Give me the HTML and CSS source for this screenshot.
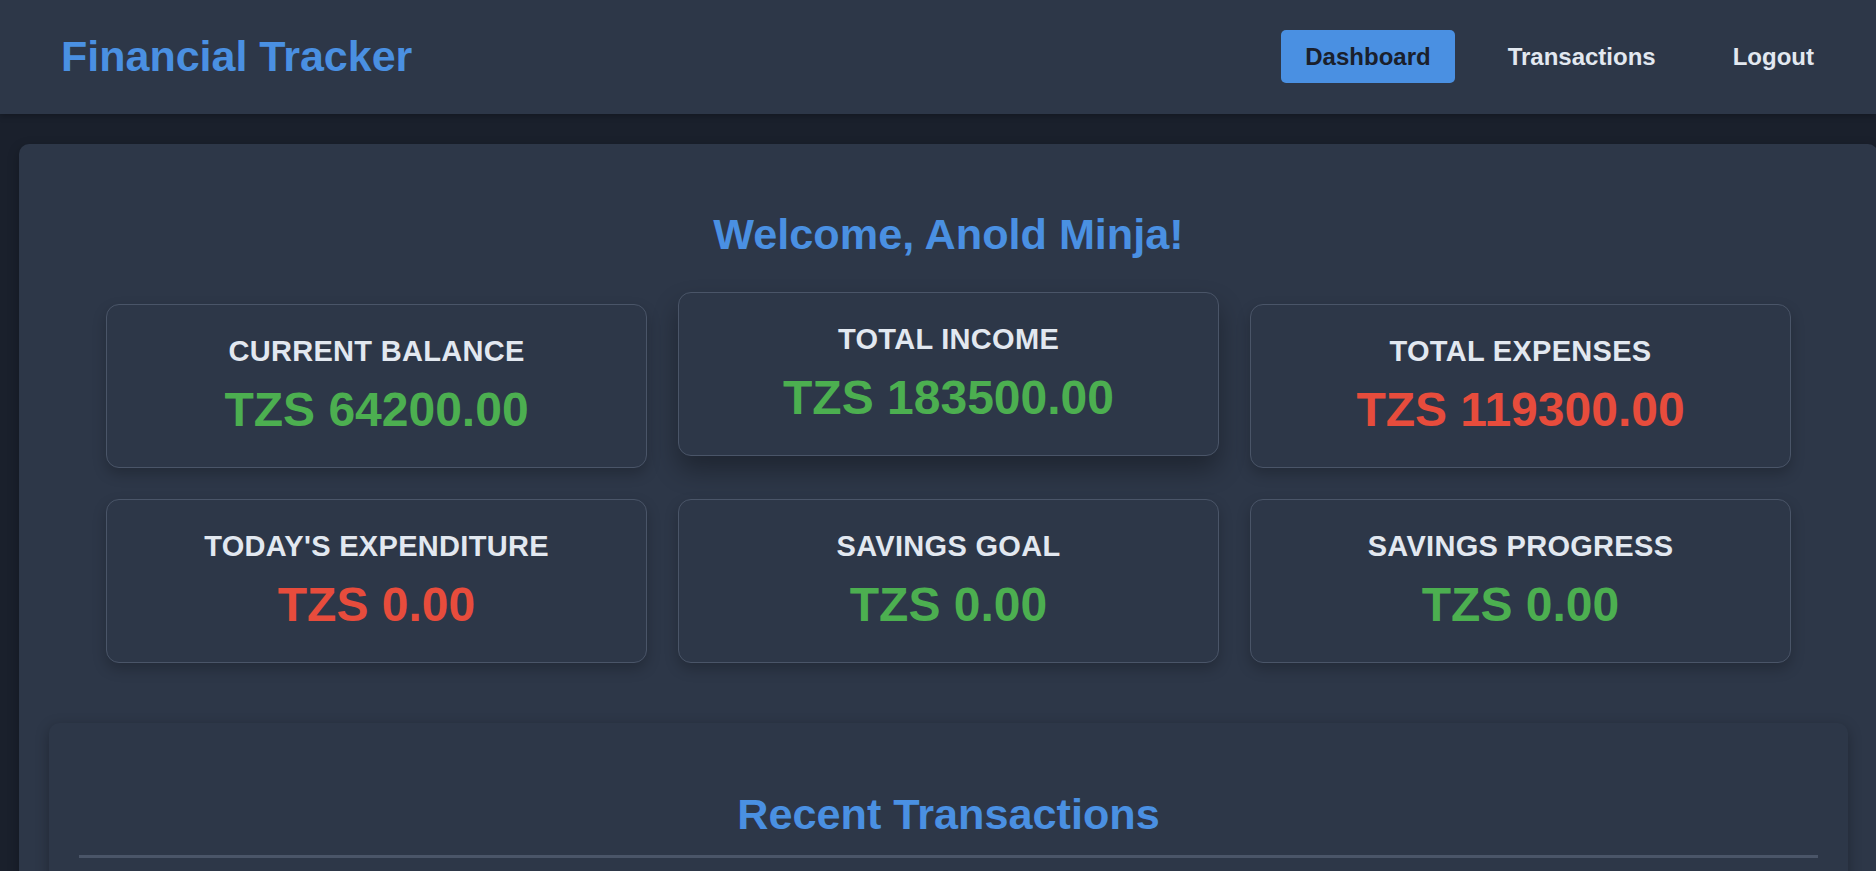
FILE: index.html
```html
<!DOCTYPE html>
<html lang="en">
<head>
<meta charset="utf-8">
<title>Financial Tracker</title>
<link rel="stylesheet" href="styles.css">
</head>
<body>
<header class="topbar">
  <h1 class="brand">Financial Tracker</h1>
  <nav class="nav">
    <a class="nav-link active" href="#">Dashboard</a>
    <a class="nav-link" href="#">Transactions</a>
    <a class="nav-link" href="#">Logout</a>
  </nav>
</header>
<main class="main-card">
  <h2 class="welcome">Welcome, Anold Minja!</h2>
  <section class="stats">
    <div class="stat">
      <h3 class="stat-label">Current Balance</h3>
      <p class="stat-value pos">TZS 64200.00</p>
    </div>
    <div class="stat raised">
      <h3 class="stat-label">Total Income</h3>
      <p class="stat-value pos">TZS 183500.00</p>
    </div>
    <div class="stat">
      <h3 class="stat-label">Total Expenses</h3>
      <p class="stat-value neg">TZS 119300.00</p>
    </div>
    <div class="stat">
      <h3 class="stat-label">Today's Expenditure</h3>
      <p class="stat-value neg">TZS 0.00</p>
    </div>
    <div class="stat">
      <h3 class="stat-label">Savings Goal</h3>
      <p class="stat-value pos">TZS 0.00</p>
    </div>
    <div class="stat">
      <h3 class="stat-label">Savings Progress</h3>
      <p class="stat-value pos">TZS 0.00</p>
    </div>
  </section>
  <section class="recent">
    <h2 class="recent-title">Recent Transactions</h2>
  </section>
</main>
</body>
</html>
```
FILE: styles.css
```css
html {
  overflow: hidden;
}
body {
  margin: 0;
  background: #1a202c;
  font-family: "Liberation Sans", Arial, sans-serif;
  color: #e2e8f0;
  width: 1876px;
}
.topbar {
  height: 114px;
  box-sizing: border-box;
  background: #2d3748;
  display: flex;
  align-items: center;
  justify-content: space-between;
  padding: 0 38px 0 61px;
  box-shadow: 0 2px 6px rgba(0, 0, 0, 0.25);
}
.brand {
  margin: 0;
  font-size: 43px;
  font-weight: 700;
  color: #4a90e2;
  line-height: 1.15;
}
.nav {
  display: flex;
  gap: 29px;
  align-items: center;
  margin-bottom: 1px;
}
.nav-link {
  display: block;
  font-size: 24px;
  font-weight: 700;
  line-height: 29px;
  padding: 12px 24px;
  color: #e2e8f0;
  text-decoration: none;
  border-radius: 5px;
}
.nav-link.active {
  background: #4a90e2;
  color: #1a202c;
}
.main-card {
  display: block;
  margin: 30px 0 0 19px;
  width: 1859px;
  box-sizing: border-box;
  background: #2d3748;
  border-radius: 10px;
  padding: 30px 30px 40px;
  box-shadow: 0 4px 12px rgba(0, 0, 0, 0.25);
}
.welcome {
  margin: 35px 0 0;
  text-align: center;
  font-size: 43.2px;
  font-weight: 700;
  color: #4a90e2;
  line-height: 50px;
}
.stats {
  display: grid;
  grid-template-columns: repeat(3, 1fr);
  gap: 31px;
  margin: 45px 57px 0;
}
.stat {
  background: #2d3748;
  border: 1px solid #4a5568;
  border-radius: 13px;
  padding: 29px 20px 30px;
  text-align: center;
  box-shadow: 0 6px 14px rgba(0, 0, 0, 0.22);
}
.stat.raised {
  transform: translateY(-12px);
  box-shadow: 0 14px 26px rgba(0, 0, 0, 0.32);
}
.stat-label {
  margin: 0 0 14px;
  font-size: 29px;
  line-height: 34px;
  font-weight: 700;
  text-transform: uppercase;
  letter-spacing: 0.3px;
  color: #e2e8f0;
}
.stat-value {
  margin: 0;
  font-size: 48px;
  line-height: 55px;
  font-weight: 700;
}
.pos {
  color: #4caf50;
}
.neg {
  color: #e74c3c;
}
.recent {
  margin-top: 60px;
  background: #2d3748;
  border-radius: 10px;
  padding: 30px 30px 60px;
  box-shadow: 0 4px 14px rgba(0, 0, 0, 0.28);
}
.recent-title {
  margin: 36px 0 0;
  text-align: center;
  font-size: 43.2px;
  line-height: 50px;
  font-weight: 700;
  color: #4a90e2;
  padding-bottom: 16px;
  border-bottom: 3px solid #4a5568;
}
```
